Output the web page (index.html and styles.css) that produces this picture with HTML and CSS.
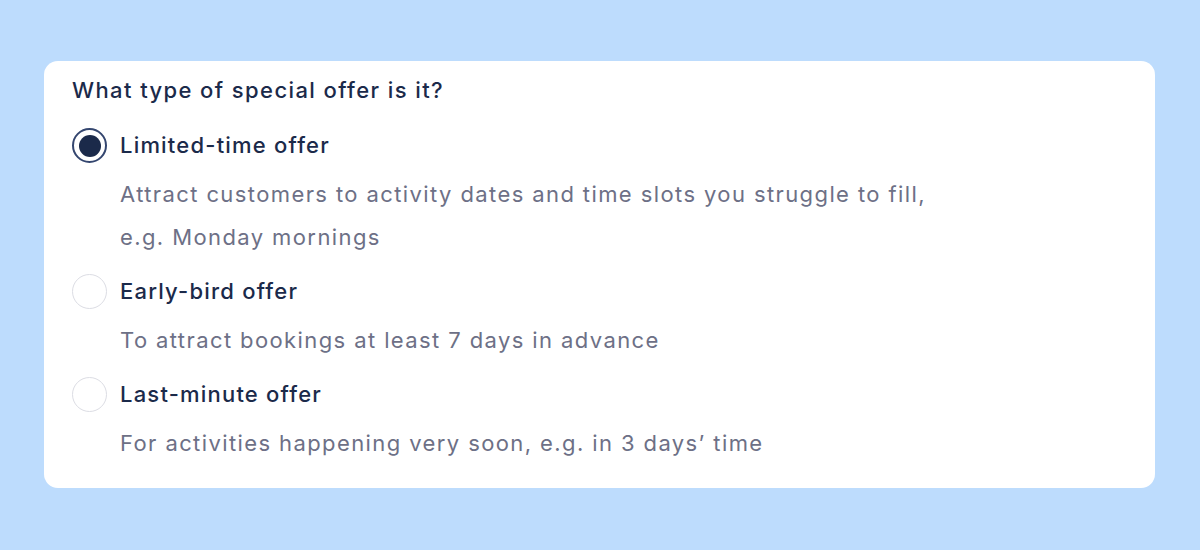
FILE: index.html
```html
<!DOCTYPE html>
<html lang="en">
<head>
    <meta charset="UTF-8">
    <meta name="viewport" content="width=device-width, initial-scale=1.0">
    <title>Special offer type</title>
    <link rel="stylesheet" href="styles.css">
</head>
<body>
    <div class="card">
        <h2 class="question">What type of special offer is it?</h2>

        <!-- Offer options -->
        <label class="option">
            <input type="radio" name="offer-type" value="limited" checked>
            <span class="radio"></span>
            <span class="option-title">Limited-time offer</span>
            <span class="option-desc">Attract customers to activity dates and time slots you struggle to fill,<br>e.g. Monday mornings</span>
        </label>

        <label class="option">
            <input type="radio" name="offer-type" value="early-bird">
            <span class="radio"></span>
            <span class="option-title">Early-bird offer</span>
            <span class="option-desc">To attract bookings at least 7 days in advance</span>
        </label>

        <label class="option">
            <input type="radio" name="offer-type" value="last-minute">
            <span class="radio"></span>
            <span class="option-title">Last-minute offer</span>
            <span class="option-desc">For activities happening very soon, e.g. in 3 days’ time</span>
        </label>
    </div>
</body>
</html>
```

FILE: styles.css
```css
body {
    margin: 0;
    padding: 61px 45px 62px 44px;
    background-color: #bddcfd;
    font-family: Inter, "Open Sans", sans-serif;
    height: 100vh;
    box-sizing: border-box;
}

.card {
    background-color: #fff;
    border-radius: 14px;
    padding: 8px 28px 24px;
    height: 100%;
    box-sizing: border-box;
}

.question {
    margin: 0 0 12px;
    font-size: 22px;
    font-weight: 500;
    line-height: 43px;
    letter-spacing: 1.4px;
    color: #1b2a4a;
}

.option {
    display: grid;
    grid-template-columns: 35px 1fr;
    column-gap: 13px;
    margin-bottom: 11px;
    cursor: pointer;
}

.option input {
    display: none;
}

.radio {
    grid-row: 1;
    align-self: center;
    width: 35px;
    height: 35px;
    border: 1.5px solid #dcdde4;
    border-radius: 50%;
    box-sizing: border-box;
    position: relative;
}

.option input:checked + .radio {
    border: 2px solid #34466f;
}

.option input:checked + .radio::after {
    content: "";
    position: absolute;
    top: 4.5px;
    left: 4.5px;
    width: 22px;
    height: 22px;
    border-radius: 50%;
    background-color: #1b2a4a;
}

.option-title {
    grid-row: 1;
    grid-column: 2;
    font-size: 22px;
    font-weight: 500;
    line-height: 43px;
    letter-spacing: 1.2px;
    color: #1b2a4a;
}

.option-desc {
    grid-column: 2;
    margin-top: 6px;
    font-size: 22px;
    line-height: 43px;
    letter-spacing: 1.4px;
    color: #6d7086;
}
```
